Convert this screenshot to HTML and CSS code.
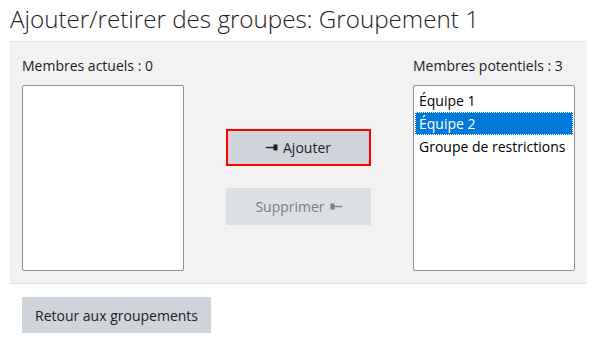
FILE: index.html
```html
<!DOCTYPE html>
<html lang="fr">
<head>
<meta charset="utf-8">
<title>Ajouter/retirer des groupes</title>
<link rel="stylesheet" href="styles.css">
</head>
<body>
<h2 class="title">Ajouter/retirer des groupes: Groupement 1</h2>
<div class="panel">
  <div class="col">
    <label class="lbl">Membres actuels : 0</label>
    <div class="listbox"></div>
  </div>
  <div class="mid">
    <button class="btn btn-focus"><svg class="arr" width="12" height="7" viewBox="0 0 12 7"><rect x="0" y="2.8" width="8" height="1.4" fill="#1d2125"/><rect x="7.5" y="0.5" width="4" height="6" fill="#1d2125"/></svg>Ajouter</button>
    <button class="btn btn-disabled">Supprimer<svg class="arr" width="12" height="7" viewBox="0 0 12 7"><rect x="0.5" y="0.5" width="4" height="6" fill="#7a7d81"/><rect x="4" y="2.8" width="8" height="1.4" fill="#7a7d81"/></svg></button>
  </div>
  <div class="col">
    <label class="lbl">Membres potentiels : 3</label>
    <div class="listbox">
      <div class="opt">Équipe 1</div>
      <div class="opt sel">Équipe 2</div>
      <div class="opt">Groupe de restrictions</div>
    </div>
  </div>
</div>
<div class="foot">
  <button class="btn btn-back">Retour aux groupements</button>
</div>
</body>
</html>
```
FILE: styles.css
```css
* { box-sizing: border-box; }
html, body { background: #fff; }
body {
  margin: 0;
  padding: 0 10px;
  font-family: "Open Sans", "Noto Sans", sans-serif;
  font-size: 14px;
  color: #1d2125;
}
.title {
  margin: 0;
  padding-top: 2px;
  height: 41px;
  font-weight: 300;
  font-size: 24.2px;
  line-height: 34px;
  color: #1d2125;
  letter-spacing: 0;
}
.panel {
  background: #f2f2f2;
  border-top: 1px solid #e2e2e2;
  border-bottom: 1px solid #dee2e6;
  padding: 14px 12px 12px 12px;
  display: flex;
  justify-content: space-between;
  height: 243px;
}
.col {
  width: 162px;
  display: flex;
  flex-direction: column;
}
.lbl {
  line-height: 20px;
  height: 20px;
  margin-bottom: 9px;
  white-space: nowrap;
}
.listbox {
  width: 162px;
  height: 186px;
  background: #fff;
  border: 1px solid #8f8f9d;
  border-radius: 2px;
  padding: 1px;
}
.opt {
  height: 23px;
  line-height: 23px;
  padding-left: 4px;
  font-size: 14px;
  color: #000;
  white-space: nowrap;
}
.opt:first-child { margin-top: 2px; }
.opt.sel {
  background: #0078d7;
  color: #fff;
  outline: 1px dotted #fff;
  outline-offset: -1px;
}
.mid {
  display: flex;
  flex-direction: column;
  align-items: center;
  padding-top: 73px;
  gap: 22px;
}
.btn {
  font-family: inherit;
  font-size: 14px;
  border: 0;
  width: 145px;
  height: 37px;
  display: flex;
  align-items: center;
  justify-content: center;
  gap: 5px;
  padding: 0;
}
.btn-focus {
  background: #ced4da;
  color: #1d2125;
  border: 2px solid #ff0000;
}
.btn-disabled {
  background: #dcdfe3;
  color: #7a7d81;
}
.arr { display: block; }
.foot {
  padding: 13px 12px 0;
}
.btn-back {
  width: 189px;
  height: 36px;
  background: #ced4da;
  color: #1d2125;
}
```
